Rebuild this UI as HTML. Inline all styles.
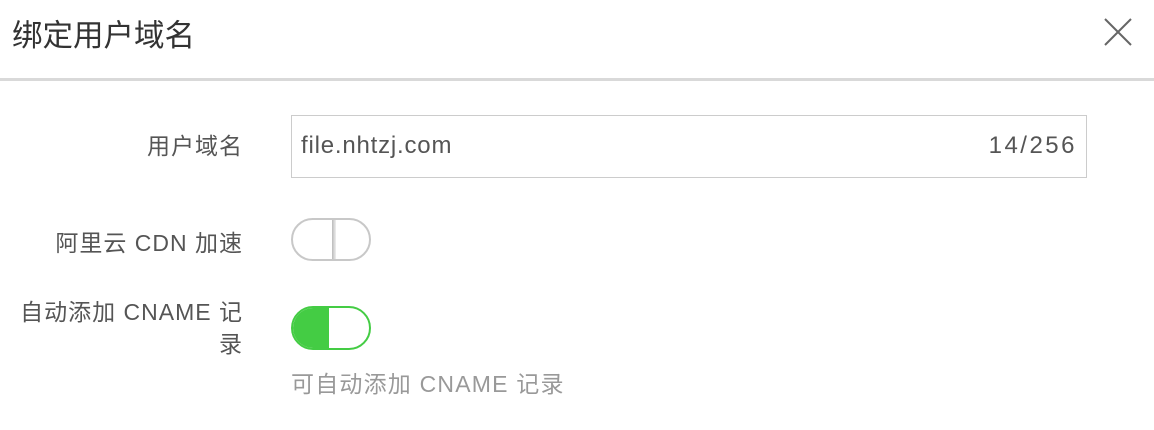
<!DOCTYPE html>
<html><head><meta charset="utf-8"><style>
body{margin:0;width:1154px;height:430px;background:#fff;font-family:"Liberation Sans","Noto Sans CJK SC",sans-serif;position:relative;overflow:hidden}
.a{position:absolute;white-space:nowrap}
.lbl{color:#555;font-size:23px;letter-spacing:1px;text-align:right;right:911px}
</style></head><body>
<div class="a" style="left:12px;top:11px;font-size:30.5px;color:#333">绑定用户域名</div>
<svg class="a" style="left:1104px;top:18px" width="28" height="28"><path d="M1 1L27 27M27 1L1 27" stroke="#666" stroke-width="2"/></svg>
<div class="a" style="left:0;top:78px;width:1154px;height:3px;background:#d9d9d9"></div>
<div class="a lbl" style="top:127px">用户域名</div>
<div class="a" style="left:291px;top:115px;width:796px;height:63px;border:1px solid #ccc;box-sizing:border-box"></div>
<div class="a" style="left:301px;top:132px;font-size:24px;letter-spacing:0.8px;color:#555">file.nhtzj.com</div>
<div class="a" style="right:77px;top:132px;font-size:24px;letter-spacing:2.5px;color:#555">14/256</div>
<div class="a lbl" style="top:224px">阿里云 CDN 加速</div>
<div class="a" style="left:291px;top:218px;width:80px;height:43px;border:2px solid #c8c8c8;border-radius:22px;box-sizing:border-box"></div>
<div class="a" style="left:332px;top:220px;width:4px;height:39px;background:linear-gradient(90deg,#bbb,#eee)"></div>
<div class="a lbl" style="top:296px;line-height:32px">自动添加 CNAME 记<br>录</div>
<div class="a" style="left:291px;top:306px;width:80px;height:44px;border:2px solid #44cc44;border-radius:22px;box-sizing:border-box;overflow:hidden"><div style="width:36px;height:100%;background:#44cc44"></div></div>
<div class="a" style="left:291px;top:365px;font-size:23px;letter-spacing:1.2px;color:#999">可自动添加 CNAME 记录</div>
</body></html>
